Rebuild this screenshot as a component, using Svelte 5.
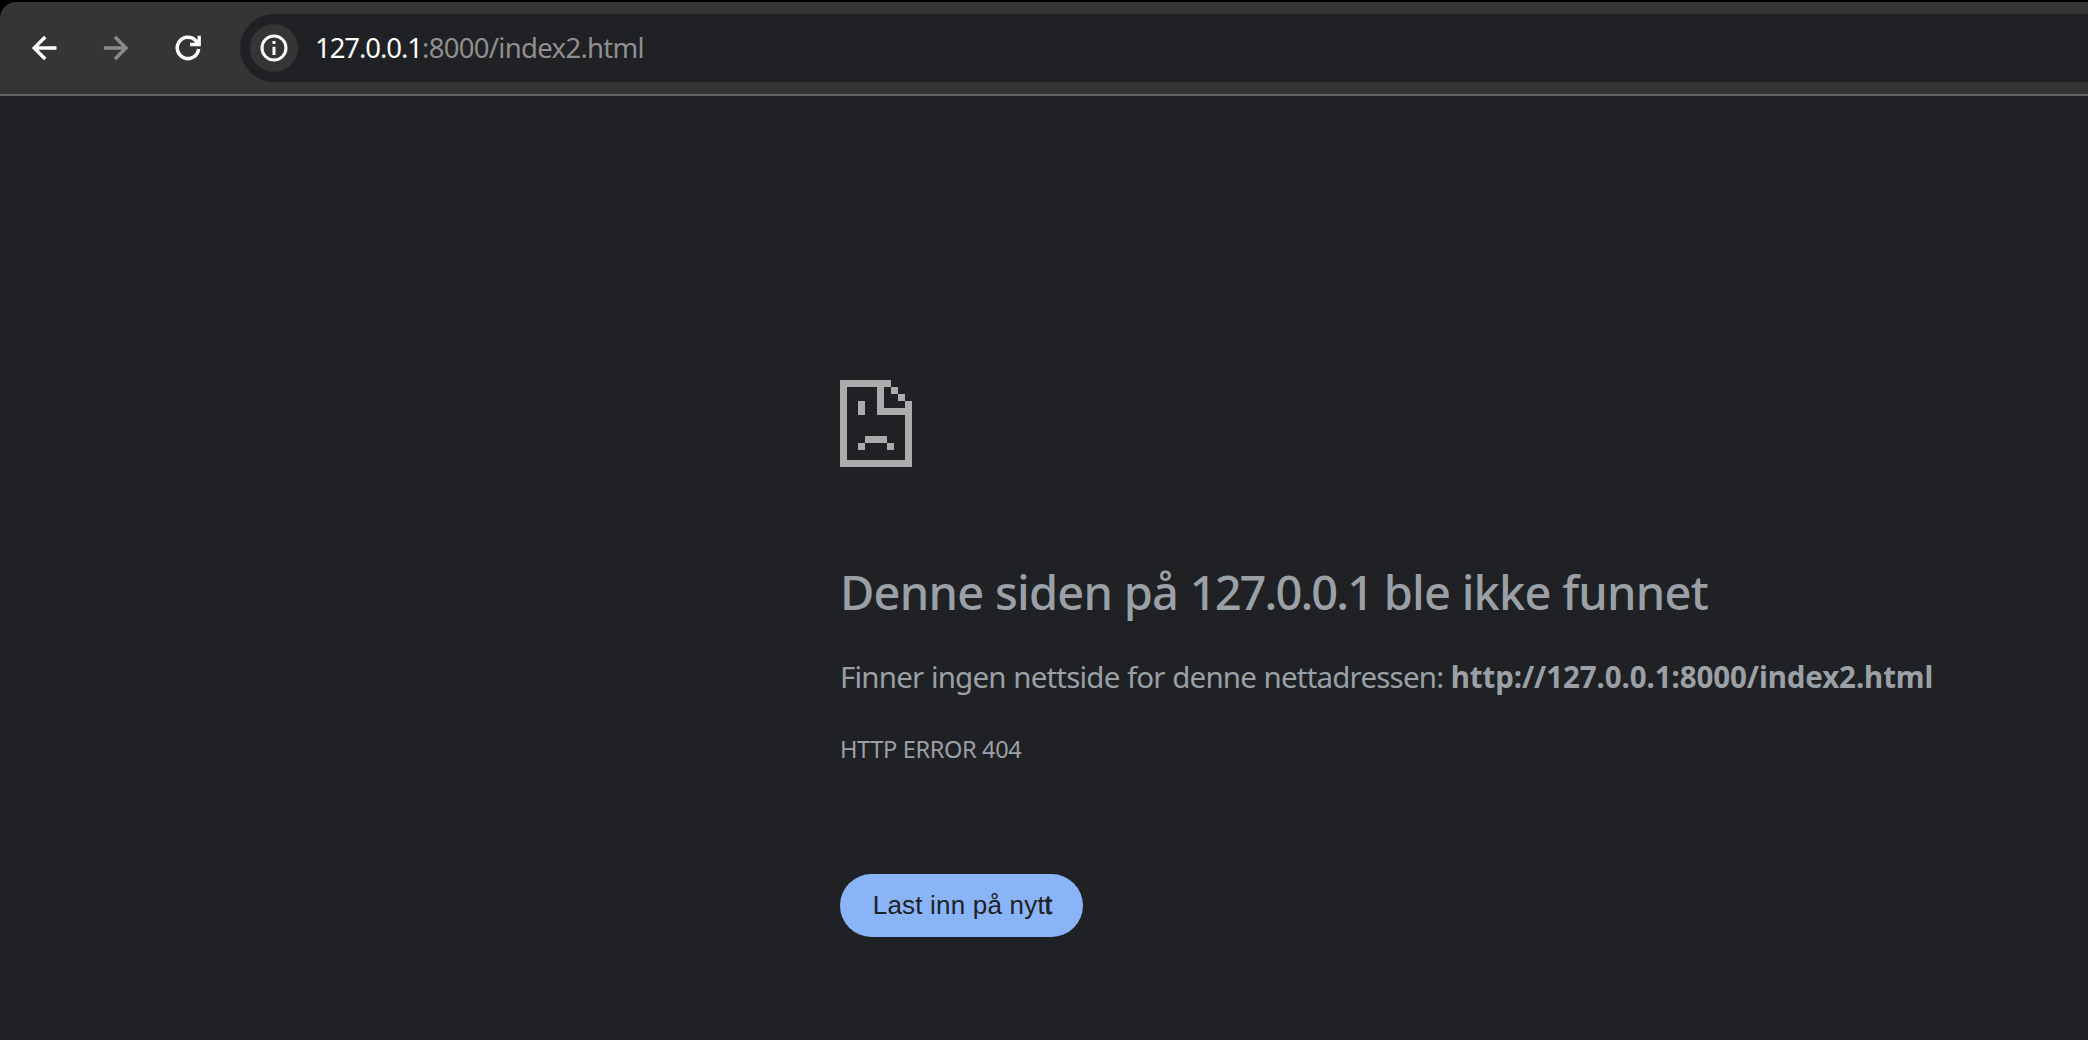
<script>
  const host = '127.0.0.1';
  const rest = ':8000/index2.html';
</script>

<div class="window">
  <header class="toolbar">
    <nav class="nav">
      <button class="tool" aria-label="Tilbake">
        <svg width="36" height="36" viewBox="0 0 36 36" fill="none" stroke="currentColor" stroke-width="3.400">
          <path d="M30.500 18H8M19.200 7 8.200 18l11 11" />
        </svg>
      </button>
      <button class="tool disabled" aria-label="Fremover">
        <svg width="36" height="36" viewBox="0 0 36 36" fill="none" stroke="currentColor" stroke-width="3.400">
          <path d="M5.800 18h22.500M17 7l11 11-11 11" />
        </svg>
      </button>
      <button class="tool" aria-label="Last inn på nytt">
        <svg width="36" height="36" viewBox="0 0 36 36" fill="none" stroke="currentColor" stroke-width="3.500">
          <path d="M28.600 19A10.700 10.700 0 1 1 25.200 10L28 14" />
          <path d="M29.200 5.800v8.700H20" stroke-width="3.300" />
        </svg>
      </button>
    </nav>
    <div class="omnibox">
      <span class="info">
        <svg width="30" height="30" viewBox="0 0 30 30" fill="none" stroke="currentColor" stroke-width="3">
          <circle cx="15" cy="15" r="12" />
          <path d="M15 13.700v8.300M15 8v3" />
        </svg>
      </span>
      <span class="url"><span class="host">{host}</span><span class="rest">{rest}</span></span>
    </div>
  </header>

  <main class="error">
    <svg class="sad" width="72" height="87" viewBox="0 0 72 87" fill="#acacac" shape-rendering="crispEdges">
      <path d="M0 0H51V7H44V28H65V21H72V87H0ZM7 7V80H65V35H37V7Z" fill-rule="evenodd" />
      <path d="M51 7h7v7h-7zM58 14h7v7h-7zM18 21h7v14h-7zM25 56h22v7H25zM18 63h7v7h-7zM47 63h7v7h-7z" />
    </svg>
    <h1>Denne siden på <span class="ip">{host}</span> ble ikke funnet</h1>
    <p class="summary">Finner ingen nettside for denne nettadressen: <strong>http://{host}{rest}</strong></p>
    <p class="code">HTTP ERROR 404</p>
    <button class="reload">Last inn på nyt<span class="heavy">t</span></button>
  </main>
</div>

<style>
  :global(body) {
    background: #000;
  }
  .window {
    box-sizing: border-box;
    height: 1040px;
    padding-top: 2px;
    display: flex;
    flex-direction: column;
    overflow: hidden;
    background: #000;
    font-family: "Noto Sans", sans-serif;
  }
  button {
    border: 0;
    padding: 0;
    background: none;
  }
  .toolbar {
    box-sizing: border-box;
    height: 94px;
    flex: none;
    display: flex;
    align-items: center;
    gap: 16px;
    padding-left: 8px;
    background: #353535;
    border-bottom: 2px solid #636363;
    border-top-left-radius: 16px;
  }
  .nav {
    display: flex;
    width: 216px;
  }
  .tool {
    width: 72px;
    height: 68px;
    display: grid;
    place-items: center;
    color: #fff;
  }
  .tool.disabled {
    color: #8a8a8a;
  }
  .omnibox {
    flex: 1;
    box-sizing: border-box;
    height: 68px;
    display: flex;
    align-items: center;
    gap: 17px;
    padding-left: 10px;
    background: #202124;
    border-radius: 34px 0 0 34px;
  }
  .info {
    width: 48px;
    height: 48px;
    display: grid;
    place-items: center;
    border-radius: 50%;
    background: #353535;
    color: #fff;
  }
  .url {
    font-size: 27.5px;
    line-height: 40px;
    white-space: nowrap;
  }
  .host {
    color: #fff;
    letter-spacing: -1.05px;
  }
  .rest {
    color: #8f8f8f;
    letter-spacing: -0.7px;
  }
  .error {
    flex: 1;
    display: flex;
    flex-direction: column;
    align-items: flex-start;
    padding: 284px 0 0 840px;
    background: #202124;
    color: #9aa0a6;
    white-space: nowrap;
  }
  .sad {
    display: block;
    flex: none;
  }
  h1 {
    margin: 96px 0 0;
    font-size: 47px;
    font-weight: 500;
    line-height: 58px;
    letter-spacing: -0.76px;
  }
  .ip {
    letter-spacing: -1.9px;
  }
  p {
    margin: 0;
  }
  .summary {
    margin-top: 33px;
    font-size: 29.5px;
    line-height: 45px;
    letter-spacing: -0.8px;
    word-spacing: 0.6px;
  }
  .summary strong {
    font-weight: 700;
    letter-spacing: -0.1px;
  }
  .code {
    margin-top: 32px;
    font-size: 23.6px;
    line-height: 36px;
    letter-spacing: -0.38px;
  }
  .reload {
    width: 243px;
    height: 63px;
    margin-top: 107px;
    padding-bottom: 2px;
    padding-left: 2px;
    border-radius: 32px;
    background: #8ab4f8;
    color: #202124;
    font: 26px/36px "Liberation Sans", Arial, sans-serif;
    letter-spacing: 0.2px;
  }
  .heavy {
    -webkit-text-stroke: 0.8px currentColor;
  }
</style>
